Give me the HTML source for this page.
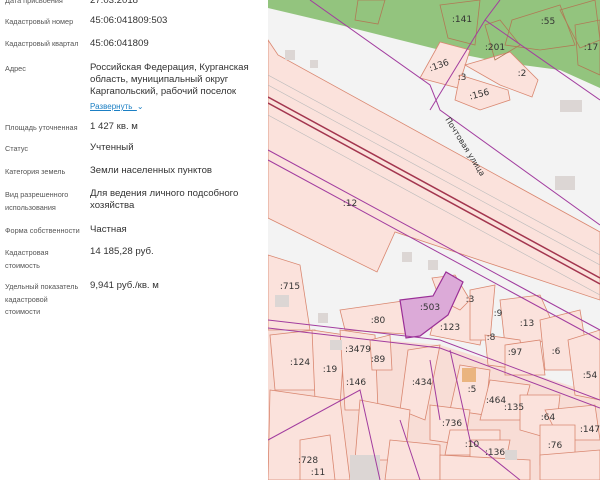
<!DOCTYPE html>
<html><head><meta charset="utf-8"><style>
*{margin:0;padding:0;box-sizing:border-box}
body{width:600px;height:480px;overflow:hidden;background:#fff;font-family:"Liberation Sans","DejaVu Sans",sans-serif;position:relative}
#panel{position:absolute;left:0;top:0;width:268px;height:480px;background:#fff}
.l{position:absolute;left:5px;font-size:7.3px;color:#555;line-height:12.5px}
.v{position:absolute;left:90px;font-size:9.6px;color:#333;line-height:12px}
.a{color:#1b7fc4;text-decoration:underline;font-size:8px}
svg{position:absolute;left:268px;top:0}
.t{font-size:9px;fill:#333;font-family:"DejaVu Sans",sans-serif}
</style></head><body>
<div id="panel">
<div class="l" style="top:-5px">Дата присвоения</div><div class="v" style="top:-5px">27.03.2018</div>
<div class="l" style="top:16px">Кадастровый номер</div><div class="v" style="top:15px">45:06:041809:503</div>
<div class="l" style="top:38px">Кадастровый квартал</div><div class="v" style="top:38px">45:06:041809</div>
<div class="l" style="top:63px">Адрес</div><div class="v" style="top:62px">Российская Федерация, Курганская<br>область, муниципальный округ<br>Каргапольский, рабочий поселок</div>
<div class="v a" style="top:101px">Развернуть &nbsp;<span style="text-decoration:none;display:inline-block">&#8964;</span></div>
<div class="l" style="top:122px">Площадь уточненная</div><div class="v" style="top:121px">1 427 кв. м</div>
<div class="l" style="top:143px">Статус</div><div class="v" style="top:142px">Учтенный</div>
<div class="l" style="top:166px">Категория земель</div><div class="v" style="top:165px">Земли населенных пунктов</div>
<div class="l" style="top:189px">Вид разрешенного<br>использования</div><div class="v" style="top:188px">Для ведения личного подсобного<br>хозяйства</div>
<div class="l" style="top:225px">Форма собственности</div><div class="v" style="top:224px">Частная</div>
<div class="l" style="top:247px">Кадастровая<br>стоимость</div><div class="v" style="top:246px">14 185,28 руб.</div>
<div class="l" style="top:281px">Удельный показатель<br>кадастровой<br>стоимости</div><div class="v" style="top:280px">9,941 руб./кв. м</div>
</div>
<svg width="332" height="480" viewBox="268 0 332 480">
<rect x="268" y="0" width="332" height="480" fill="#f3f3f3"/>
<polygon points="268,0 600,0 600,88 560,70 500,62 440,50 340,25 268,8" fill="#93c47e"/>
<polygon points="268,330 440,345 600,395 600,480 268,480" fill="#f8ddd6"/>
<g fill="#fbe2dc" stroke="#d98770" stroke-width="0.8">
<polygon points="268,40 278,55 591,227 600,232 600,300 395,232 377,272 268,218"/>
<polygon points="440,42 470,50 458,88 420,78"/><polygon points="465,65 510,52 538,80 532,97 500,85"/>
<polygon points="460,75 508,90 510,100 480,110 455,100"/>
<polygon points="268,255 300,265 310,330 268,330"/><polygon points="340,310 410,300 420,335 345,330"/>
<polygon points="440,300 490,300 480,345 430,335"/>
<polygon points="432,278 455,275 470,300 460,310 440,300"/><polygon points="470,290 495,285 490,340 470,340"/>
<polygon points="500,300 540,295 560,340 505,345"/><polygon points="485,335 520,340 525,370 488,365"/>
<polygon points="505,345 540,340 545,375 505,375"/><polygon points="540,320 580,310 590,370 545,370"/>
<polygon points="568,340 600,330 600,400 575,395"/>
<polygon points="270,335 315,330 320,390 275,390"/><polygon points="312,330 345,335 340,405 315,400"/>
<polygon points="340,330 375,335 378,410 345,410"/><polygon points="370,340 390,335 392,370 372,370"/>
<polygon points="408,350 440,345 425,420 400,410"/><polygon points="460,365 490,370 485,415 450,410"/>
<polygon points="490,380 530,385 520,420 480,420"/><polygon points="520,395 560,395 555,440 520,430"/>
<polygon points="545,410 595,405 600,440 560,440"/><polygon points="430,405 470,410 465,445 430,440"/>
<polygon points="450,430 500,430 500,455 445,455"/><polygon points="470,440 510,440 505,465 470,465"/>
<polygon points="540,425 575,425 575,465 540,465"/><polygon points="270,390 340,400 350,480 268,480"/>
<polygon points="300,440 330,435 335,480 300,480"/><polygon points="360,400 410,410 405,460 355,460"/>
<polygon points="390,440 440,445 440,480 385,480"/><polygon points="440,455 530,460 530,480 440,480"/>
<polygon points="540,455 600,450 600,480 540,480"/>
</g>
<g fill="none" stroke="#b07a55" stroke-width="0.8">
<polygon points="358,0 385,0 378,24 355,20"/><polygon points="440,5 480,0 475,45 448,38"/>
<polygon points="512,20 560,5 575,45 540,50 505,45"/>
<polygon points="560,10 595,0 600,40 580,48"/><polygon points="575,25 600,20 600,75 578,65"/>
<polygon points="485,25 500,20 520,45 495,60"/>
</g>
<polygon points="400,300 433,296 446,272 463,282 448,315 420,336 406,338" fill="#dcaad8" stroke="#9a2f97" stroke-width="1.2"/>
<rect x="462" y="368" width="14" height="14" fill="#eab47f"/>
<g fill="#dcd6d4"><rect x="402" y="252" width="10" height="10"/><rect x="428" y="260" width="10" height="10"/><rect x="285" y="50" width="10" height="10"/><rect x="310" y="60" width="8" height="8"/><rect x="560" y="100" width="22" height="12"/><rect x="555" y="176" width="20" height="14"/><rect x="275" y="295" width="14" height="12"/><rect x="318" y="313" width="10" height="10"/><rect x="330" y="340" width="12" height="10"/><rect x="505" y="450" width="12" height="10"/><rect x="350" y="455" width="30" height="25"/></g>
<g fill="none" stroke="#a23d9f" stroke-width="1">
<path d="M310,0 L430,85 L440,110 L600,225"/><path d="M430,110 L485,20 L500,0"/><path d="M485,20 L600,100"/>
<path d="M268,150 L600,330"/><path d="M268,160 L600,340"/><path d="M268,320 L440,340 L600,400"/><path d="M268,328 L440,348 L600,408"/>
<path d="M268,440 L360,390 L380,480"/><path d="M400,420 L420,480"/><path d="M430,360 L440,420"/><path d="M450,350 L470,440 L520,480"/>
</g>
<g fill="none" stroke="#a3364f" stroke-width="1.5"><path d="M268,97 L600,278"/><path d="M268,103 L600,284"/></g>
<g fill="none" stroke="#bbb" stroke-width="0.6"><path d="M268,75 L600,255"/><path d="M268,85 L600,265"/><path d="M268,115 L600,295"/></g>
<g class="t" text-anchor="middle">
<text x="440" y="68" transform="rotate(-20 440 68)">:136</text><text x="462" y="80">:3</text><text x="522" y="76">:2</text>
<text x="480" y="97" transform="rotate(-15 480 97)">:156</text><text x="462" y="22">:141</text><text x="495" y="50">:201</text>
<text x="548" y="24">:55</text><text x="591" y="50">:17</text><text x="350" y="206">:12</text>
<text x="290" y="289">:715</text><text x="378" y="323">:80</text><text x="430" y="310">:503</text><text x="450" y="330">:123</text>
<text x="470" y="302">:3</text><text x="498" y="316">:9</text><text x="527" y="326">:13</text><text x="491" y="340">:8</text>
<text x="515" y="355">:97</text><text x="556" y="354">:6</text><text x="590" y="378">:54</text><text x="300" y="365">:124</text>
<text x="330" y="372">:19</text><text x="358" y="352">:3479</text><text x="378" y="362">:89</text><text x="356" y="385">:146</text>
<text x="422" y="385">:434</text><text x="472" y="392">:5</text><text x="496" y="403">:464</text><text x="514" y="410">:135</text>
<text x="548" y="420">:64</text><text x="590" y="432">:147</text><text x="452" y="426">:736</text><text x="472" y="447">:10</text>
<text x="495" y="455">:136</text><text x="555" y="448">:76</text><text x="308" y="463">:728</text><text x="318" y="475">:11</text>
<text x="463" y="148" transform="rotate(58 463 148)" font-size="8">Почтовая улица</text>
</g>
</svg>
</body></html>
